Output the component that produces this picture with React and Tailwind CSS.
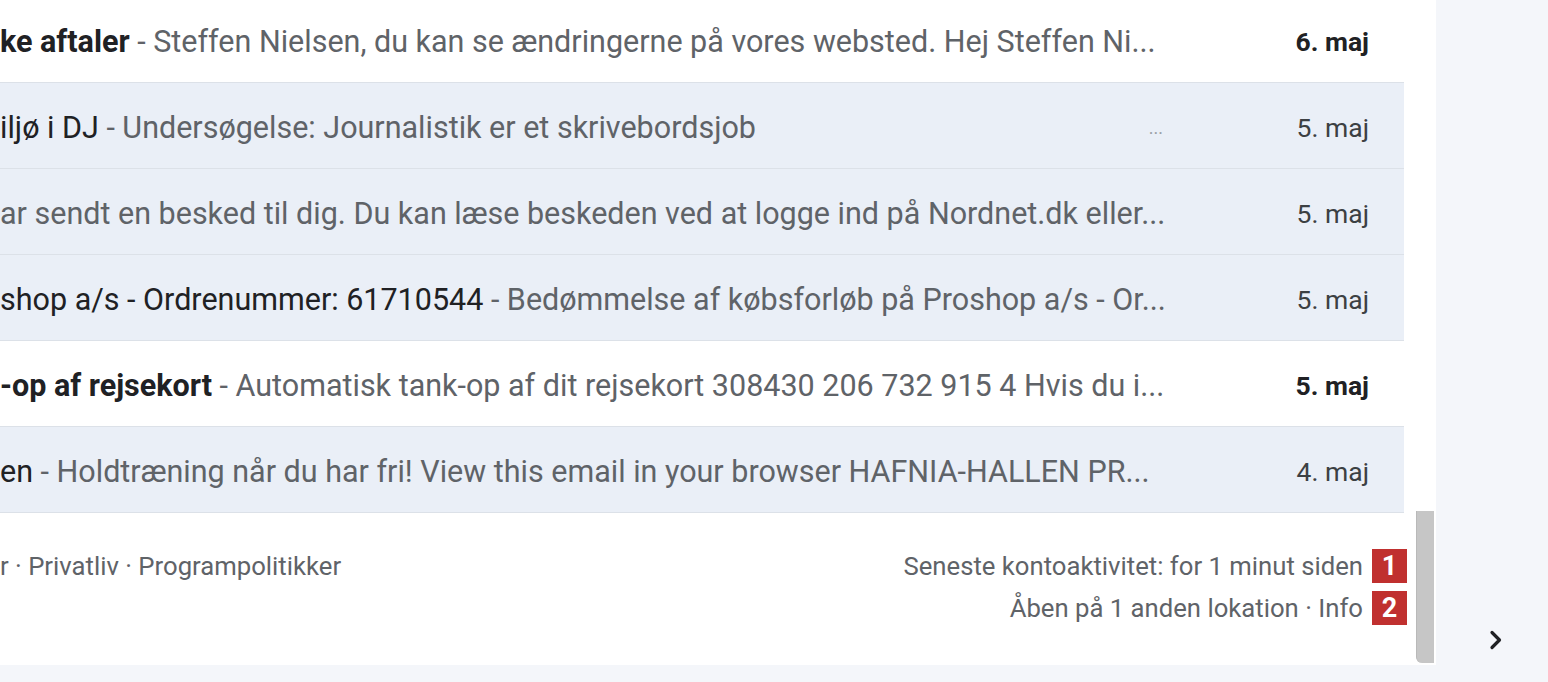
import React from 'react';

const ROWS = [
  {
    unread: true,
    subject: 'ke aftaler',
    snippet: ' - Steffen Nielsen, du kan se ændringerne på vores websted. Hej Steffen Ni...',
    date: '6. maj',
  },
  {
    unread: false,
    subject: 'iljø i DJ',
    snippet: ' - Undersøgelse: Journalistik er et skrivebordsjob',
    tail: '...',
    date: '5. maj',
  },
  {
    unread: false,
    subject: '',
    snippet: 'ar sendt en besked til dig. Du kan læse beskeden ved at logge ind på Nordnet.dk eller...',
    date: '5. maj',
  },
  {
    unread: false,
    subject: 'shop a/s - Ordrenummer: 61710544',
    snippet: ' - Bedømmelse af købsforløb på Proshop a/s - Or...',
    date: '5. maj',
  },
  {
    unread: true,
    subject: '-op af rejsekort',
    snippet: ' - Automatisk tank-op af dit rejsekort 308430 206 732 915 4 Hvis du i...',
    date: '5. maj',
  },
  {
    unread: false,
    subject: 'en',
    snippet: ' - Holdtræning når du har fri! View this email in your browser HAFNIA-HALLEN PR...',
    date: '4. maj',
  },
];

function Badge({ n }) {
  return (
    <span className="ml-[9px] mr-[-3px] inline-flex h-[34px] w-[35px] items-center justify-center bg-[#c0302f] text-[27px] font-bold leading-none text-white">
      {n}
    </span>
  );
}

function MailRow({ row, first }) {
  return (
    <div
      className={`flex h-[86px] items-center border-b border-[#dce1e8] pt-[4px] ${
        first ? 'mt-[-3px]' : ''
      } ${row.unread ? 'bg-white' : 'bg-[#eaeff7]'}`}
    >
      <div className="flex min-w-0 w-[1180px] items-center whitespace-pre text-[30.5px]">
        {row.subject && (
          <span className={row.unread ? 'font-bold text-[#202124]' : 'text-[#202124]'}>
            {row.subject}
          </span>
        )}
        <span className="text-[#5f6368]">{row.snippet}</span>
        {row.tail && (
          <>
            <span className="flex-1" />
            <span className="pr-[17px] text-[18px] text-[#9aa0a6]">{row.tail}</span>
          </>
        )}
      </div>
      <div
        className={`flex-1 pr-[35px] text-right text-[26.5px] ${
          row.unread ? 'font-bold text-[#202124]' : 'text-[#3c4043]'
        }`}
      >
        {row.date}
      </div>
    </div>
  );
}

export default function App() {
  return (
    <div
      className="flex h-[682px] w-[1548px] overflow-hidden bg-[#f4f6fa]"
      style={{ fontFamily: 'Roboto, "Liberation Sans", sans-serif' }}
    >
      {/* Mail list panel */}
      <div className="flex h-[665px] w-[1436px] bg-white">
        <div className="flex w-[1404px] flex-col">
          {ROWS.map((row, i) => (
            <MailRow key={i} row={row} first={i === 0} />
          ))}

          {/* Footer */}
          <div className="flex flex-1 items-start justify-between pt-[36px] text-[25.7px] text-[#5f6368]">
            <div className="leading-[34px]">r · Privatliv · Programpolitikker</div>
            <div className="flex flex-col items-end gap-[8px] leading-[34px]">
              <div className="flex items-center">
                Seneste kontoaktivitet: for 1 minut siden
                <Badge n="1" />
              </div>
              <div className="flex items-center">
                Åben på 1 anden lokation · Info
                <Badge n="2" />
              </div>
            </div>
          </div>
        </div>

        {/* Scrollbar */}
        <div className="flex w-[32px] flex-col pt-[511px]">
          <div className="ml-[12px] h-[152px] w-[18px] rounded-bl-[6px] border-l border-[#b9b9b9] bg-[#c6c6c6]" />
        </div>
      </div>

      {/* Right rail */}
      <div className="flex flex-1 flex-col items-center pt-[629px]">
        <svg width="16" height="22" viewBox="0 0 16 22" className="ml-[8px]">
          <path d="M4 3.5 L11.5 11 L4 18.5" fill="none" stroke="#202124" strokeWidth="3.2" strokeLinecap="round" strokeLinejoin="round" />
        </svg>
      </div>
    </div>
  );
}
